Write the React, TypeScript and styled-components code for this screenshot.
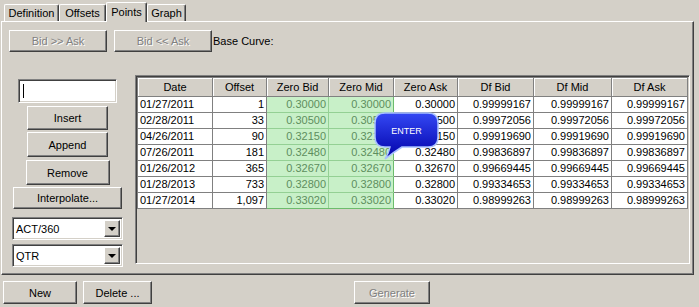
import React from 'react';
import styled, { createGlobalStyle, css } from 'styled-components';

const GlobalStyle = createGlobalStyle`
  html, body {
    margin: 0;
    padding: 0;
    background: #d4d0c8;
  }
  body {
    font-family: "Liberation Sans", Arial, sans-serif;
    font-size: 11px;
    color: #000;
  }
`;

const raised = css`
  background: #d4d0c8;
  border: 1px solid;
  border-color: #fff #404040 #404040 #fff;
  box-shadow: inset -1px -1px #808080;
`;

const sunken = css`
  border: 1px solid;
  border-color: #808080 #fff #fff #808080;
  box-shadow: inset 1px 1px #404040, inset -1px -1px #d4d0c8;
`;

const Window = styled.div`
  width: 699px;
  height: 307px;
  background: #d4d0c8;
  overflow: hidden;
`;

const TabStrip = styled.div`
  display: flex;
  align-items: flex-end;
  height: 21px;
  padding-left: 4px;
  position: relative;
  z-index: 1;
`;

const Tab = styled.div<{ $w: number; $active?: boolean }>`
  width: ${(p) => p.$w}px;
  height: ${(p) => (p.$active ? 20 : 17)}px;
  margin-bottom: ${(p) => (p.$active ? -1 : 0)}px;
  box-sizing: border-box;
  display: flex;
  align-items: center;
  justify-content: center;
  padding-bottom: ${(p) => (p.$active ? 2 : 0)}px;
  background: #d4d0c8;
  border-top: 1px solid #fff;
  border-left: 1px solid #fff;
  border-right: 1px solid #404040;
  box-shadow: inset -1px 0 #808080;
  border-radius: 2px 2px 0 0;
`;

const Panel = styled.div`
  margin-left: 1px;
  width: 693px;
  height: 254px;
  box-sizing: border-box;
  border-top: 1px solid #fff;
  border-left: 1px solid #fff;
  border-right: 1px solid #404040;
  border-bottom: 1px solid #404040;
  box-shadow: inset -1px -1px #808080;
  padding: 8px 3px 0 7px;
  display: flex;
  flex-direction: column;
`;

const TopRow = styled.div`
  display: flex;
  align-items: center;
  gap: 7px;
  height: 22px;
`;

const Button = styled.div<{ $w: number; $h?: number; $disabled?: boolean }>`
  ${raised};
  width: ${(p) => p.$w}px;
  height: ${(p) => p.$h ?? 22}px;
  box-sizing: border-box;
  display: flex;
  align-items: center;
  justify-content: center;
  flex-shrink: 0;
  white-space: nowrap;
  color: ${(p) => (p.$disabled ? '#808080' : '#000')};
  text-shadow: ${(p) => (p.$disabled ? '1px 1px #fff' : 'none')};
`;

const Label = styled.span`
  margin-left: -6px;
`;

const Body = styled.div`
  display: flex;
  align-items: flex-start;
  margin-top: 23px;
`;

const LeftColumn = styled.div`
  width: 117px;
  display: flex;
  flex-direction: column;
  align-items: center;
  padding-top: 4px;
`;

const Spaced = styled.div<{ $top?: number; $left?: number }>`
  margin-top: ${(p) => p.$top ?? 0}px;
  margin-left: ${(p) => p.$left ?? 0}px;
`;

const TextBox = styled.div`
  ${sunken};
  width: 99px;
  height: 24px;
  box-sizing: border-box;
  background: #fff;
  display: flex;
  align-items: center;
  padding-left: 4px;
`;

const Caret = styled.span`
  width: 1px;
  height: 14px;
  background: #000;
`;

const Combo = styled.div`
  ${sunken};
  width: 111px;
  height: 23px;
  box-sizing: border-box;
  background: #fff;
  display: flex;
  align-items: center;
  justify-content: space-between;
  padding: 2px 2px 2px 3px;
`;

const ComboButton = styled.div`
  ${raised};
  width: 16px;
  height: 17px;
  box-sizing: border-box;
  display: flex;
  align-items: center;
  justify-content: center;
`;

const Arrow = styled.span`
  width: 0;
  height: 0;
  border-left: 4px solid transparent;
  border-right: 4px solid transparent;
  border-top: 4px solid #000;
`;

const TableBox = styled.div`
  ${sunken};
  position: relative;
  margin-left: 9px;
  flex: 1;
  height: 189px;
  box-sizing: border-box;
  padding: 1px;
`;

const Grid = styled.table`
  width: 550px;
  table-layout: fixed;
  border-collapse: collapse;
  font-size: 11px;

  tbody tr:last-child td.green {
    border-bottom-color: #6cbc6c;
  }
`;

const Head = styled.th`
  height: 18px;
  padding: 0;
  font-weight: normal;
  text-align: center;
  background: #d4d0c8;
  border: 1px solid #808080;
  box-shadow: inset 1px 1px #fff;
`;

const Cell = styled.td<{ $green?: boolean; $left?: boolean; $edge?: 'l' | 'r' }>`
  height: 15px;
  padding: 0 2px;
  line-height: 15px;
  white-space: nowrap;
  overflow: hidden;
  text-align: ${(p) => (p.$left ? 'left' : 'right')};
  background: ${(p) => (p.$green ? '#c8f0c8' : '#fff')};
  color: ${(p) => (p.$green ? '#5e8e5e' : '#000')};
  border: 1px solid ${(p) => (p.$green ? '#94d094' : '#808080')};
  ${(p) => p.$edge === 'l' && 'border-left-color: #6cbc6c;'}
  ${(p) => p.$edge === 'r' && 'border-right-color: #6cbc6c;'}
`;

const Callout = styled.svg`
  position: absolute;
  left: 232px;
  top: 32px;
`;

const BottomBar = styled.div`
  display: flex;
  align-items: center;
  margin-top: 6px;
  padding-left: 3px;
`;

const widths = [75, 54, 62, 65, 64, 76, 78, 76];
const headers = ['Date', 'Offset', 'Zero Bid', 'Zero Mid', 'Zero Ask', 'Df Bid', 'Df Mid', 'Df Ask'];

const rows: [string, string, string, string][] = [
  ['01/27/2011', '1', '0.30000', '0.99999167'],
  ['02/28/2011', '33', '0.30500', '0.99972056'],
  ['04/26/2011', '90', '0.32150', '0.99919690'],
  ['07/26/2011', '181', '0.32480', '0.99836897'],
  ['01/26/2012', '365', '0.32670', '0.99669445'],
  ['01/28/2013', '733', '0.32800', '0.99334653'],
  ['01/27/2014', '1,097', '0.33020', '0.98999263'],
];

const App: React.FC = () => {
  return (
    <Window>
      <GlobalStyle />
      <TabStrip>
        <Tab $w={55}>Definition</Tab>
        <Tab $w={47}>Offsets</Tab>
        <Tab $w={41} $active>Points</Tab>
        <Tab $w={39}>Graph</Tab>
      </TabStrip>
      <Panel>
        <TopRow>
          <Button $w={98} $disabled>Bid &gt;&gt; Ask</Button>
          <Button $w={98} $disabled>Bid &lt;&lt; Ask</Button>
          <Label>Base Curve:</Label>
        </TopRow>
        <Body>
          <LeftColumn>
            <TextBox><Caret /></TextBox>
            <Spaced $top={3}><Button $w={81} $h={24}>Insert</Button></Spaced>
            <Spaced $top={2}><Button $w={81} $h={25}>Append</Button></Spaced>
            <Spaced $top={3}><Button $w={84} $h={25}>Remove</Button></Spaced>
            <Spaced $top={2}><Button $w={109} $h={22}>Interpolate...</Button></Spaced>
            <Spaced $top={8}>
              <Combo>ACT/360<ComboButton><Arrow /></ComboButton></Combo>
            </Spaced>
            <Spaced $top={4}>
              <Combo>QTR<ComboButton><Arrow /></ComboButton></Combo>
            </Spaced>
          </LeftColumn>
          <TableBox>
            <Grid>
              <colgroup>
                {widths.map((w, i) => <col key={i} style={{ width: w }} />)}
              </colgroup>
              <thead>
                <tr>
                  {headers.map((h) => <Head key={h}>{h}</Head>)}
                </tr>
              </thead>
              <tbody>
                {rows.map(([date, offset, zero, df]) => (
                  <tr key={date}>
                    <Cell $left>{date}</Cell>
                    <Cell>{offset}</Cell>
                    <Cell $green $edge="l" className="green">{zero}</Cell>
                    <Cell $green $edge="r" className="green">{zero}</Cell>
                    <Cell>{zero}</Cell>
                    <Cell>{df}</Cell>
                    <Cell>{df}</Cell>
                    <Cell>{df}</Cell>
                  </tr>
                ))}
              </tbody>
            </Grid>
            <Callout width="77" height="57" viewBox="0 0 77 57">
              <defs>
                <linearGradient id="bubble" x1="0" y1="0" x2="0" y2="1">
                  <stop offset="0" stopColor="#3448f4" />
                  <stop offset="1" stopColor="#0000a8" />
                </linearGradient>
              </defs>
              <path
                d="M17 5 H60 Q70 5 70 15 V29 Q70 39 60 39 H34 Q26 44 17 51 Q21 45 22 39 H17 Q7 39 7 29 V15 Q7 5 17 5 Z"
                fill="url(#bubble)"
                stroke="#a8c0ff"
                strokeWidth="1.5"
              />
              <text x="38.5" y="25.5" textAnchor="middle" fill="#fff" fontSize="9" fontFamily="Liberation Sans, Arial, sans-serif">
                ENTER
              </text>
            </Callout>
          </TableBox>
        </Body>
      </Panel>
      <BottomBar>
        <Button $w={74} $h={23}>New</Button>
        <Spaced $left={6}>
          <Button $w={69} $h={23}>Delete ...</Button>
        </Spaced>
        <Spaced $left={202}>
          <Button $w={76} $h={23} $disabled>Generate</Button>
        </Spaced>
      </BottomBar>
    </Window>
  );
};

export default App;
